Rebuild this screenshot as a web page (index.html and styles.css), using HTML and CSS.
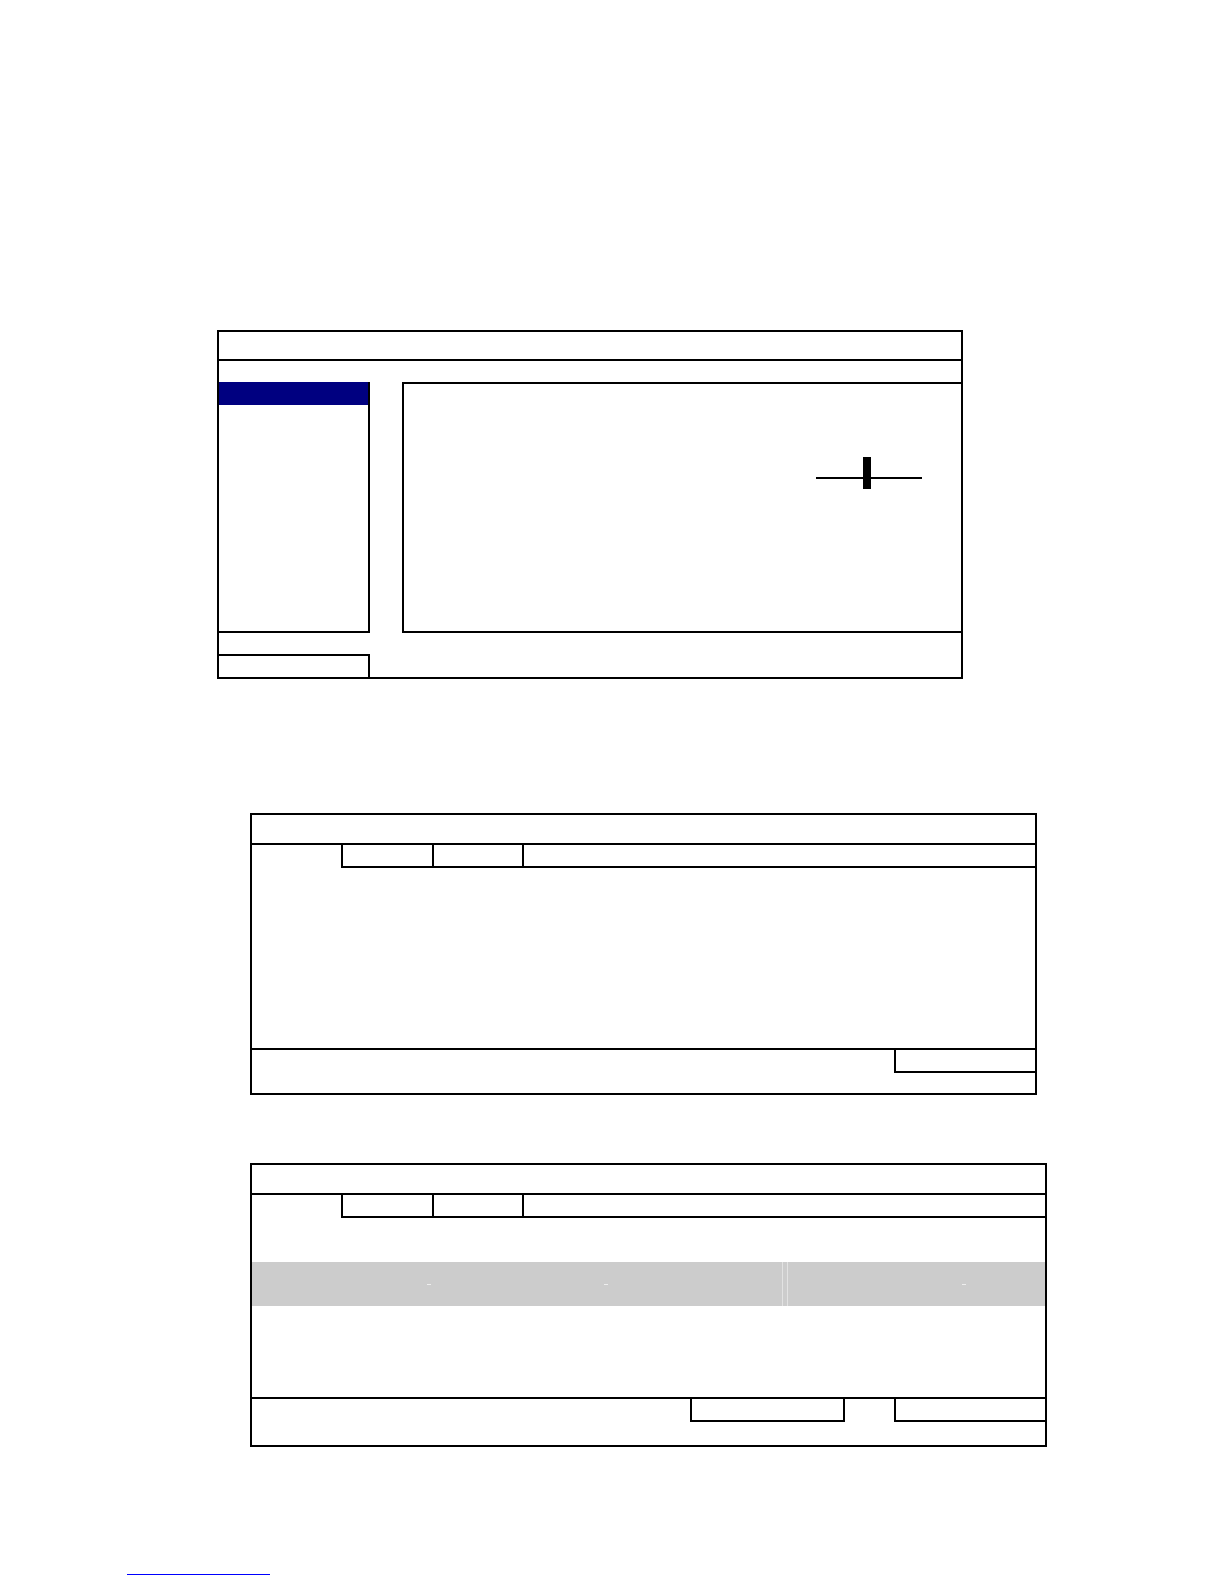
FILE: index.html
```html
<!DOCTYPE html>
<html>
<head>
<meta charset="utf-8">
<link rel="stylesheet" href="styles.css">
</head>
<body>
<div class="page">
  <div class="win win1">
    <div class="title"></div>
    <div class="spacer"></div>
    <div class="mid">
      <div class="menu"><div class="menu-sel"></div></div>
      <div class="gap"></div>
      <div class="panel">
        <div class="slider"><div class="track"></div><div class="thumb"></div></div>
      </div>
    </div>
    <div class="foot1"><div class="smallbox"></div></div>
  </div>

  <div class="win win2">
    <div class="title"></div>
    <div class="tabs">
      <div class="tab-lead"></div>
      <div class="tab"></div>
      <div class="tab"></div>
      <div class="tab tab-rest"></div>
    </div>
    <div class="body2"></div>
    <div class="foot2"><div class="btn btn-right"></div></div>
  </div>

  <div class="win win3">
    <div class="title"></div>
    <div class="tabs">
      <div class="tab-lead"></div>
      <div class="tab"></div>
      <div class="tab"></div>
      <div class="tab tab-rest"></div>
    </div>
    <div class="pad3"></div>
    <div class="band">
      <div class="band-left">
        <span class="tick tick1"></span>
        <span class="tick tick2"></span>
      </div>
      <div class="band-sep"></div>
      <div class="band-right">
        <span class="tick tick3"></span>
      </div>
    </div>
    <div class="body3"></div>
    <div class="foot3"><div class="btn btn-mid"></div><div class="btn btn-right"></div></div>
  </div>

  <a class="link" href="#"></a>
</div>
</body>
</html>
```

FILE: styles.css
```css
html, body { margin: 0; padding: 0; background: #fff; }
body { font-family: "Liberation Sans", Arial, sans-serif; }
.page { padding-top: 330px; height: 1254px; }

.win { border: 2px solid #000; box-sizing: border-box; background: #fff; }
.title { border-bottom: 2px solid #000; }

/* window 1 */
.win1 { margin-left: 217px; width: 746px; height: 349px; }
.win1 .title { height: 27px; }
.win1 .spacer { height: 21px; }
.mid { display: flex; height: 251px; }
.menu { width: 151px; box-sizing: border-box; border-right: 2px solid #000; border-bottom: 2px solid #000; }
.menu-sel { height: 23px; background: #000080; }
.gap { width: 32px; }
.panel { flex: 1; box-sizing: border-box; border-left: 2px solid #000; border-top: 2px solid #000; border-bottom: 2px solid #000; padding: 73px 0 0 412px; }
.slider { position: relative; width: 106px; height: 32px; }
.track { position: absolute; left: 0; right: 0; top: 20px; height: 2px; background: #000; }
.thumb { position: absolute; left: 47px; top: 0; width: 8px; height: 32px; background: #000; }
.foot1 { padding-top: 21px; }
.smallbox { width: 151px; height: 23px; box-sizing: border-box; border-top: 2px solid #000; border-right: 2px solid #000; }

/* tabs */
.win2, .win3 { margin-left: 250px; }
.win2 .title, .win3 .title { height: 28px; }
.tabs { display: flex; height: 23px; }
.tab-lead { width: 89px; }
.tab { width: 91px; box-sizing: border-box; border-left: 2px solid #000; border-bottom: 2px solid #000; }
.tab + .tab { width: 90px; }
.tab-rest { flex: 1; }

/* window 2 */
.win2 { margin-top: 134px; width: 787px; height: 282px; }
.body2 { height: 180px; border-bottom: 2px solid #000; }
.foot2 { display: flex; justify-content: flex-end; }
.btn { height: 23px; box-sizing: border-box; border-left: 2px solid #000; border-bottom: 2px solid #000; }
.win2 .btn-right { width: 141px; }

/* window 3 */
.win3 { margin-top: 68px; width: 797px; height: 284px; }
.pad3 { height: 44px; }
.band { display: flex; height: 44px; background: #cccccc; }
.band-left { position: relative; width: 530px; }
.band-sep { width: 6px; box-sizing: border-box; border-left: 1px solid #e2e2e2; border-right: 1px solid #e2e2e2; }
.band-right { position: relative; flex: 1; }
.tick { position: absolute; top: 22px; width: 4px; height: 1px; background: #eeeeee; }
.tick1 { left: 175px; }
.tick2 { left: 352px; }
.tick3 { left: 174px; }
.body3 { height: 91px; border-bottom: 2px solid #000; }
.foot3 { display: flex; }
.win3 .btn-mid { margin-left: 438px; width: 155px; border-right: 2px solid #000; }
.win3 .btn-right { margin-left: 49px; flex: 1; }

.link { display: block; margin-top: 127px; margin-left: 127px; width: 143px; height: 1px; background: #0000ff; }
```
